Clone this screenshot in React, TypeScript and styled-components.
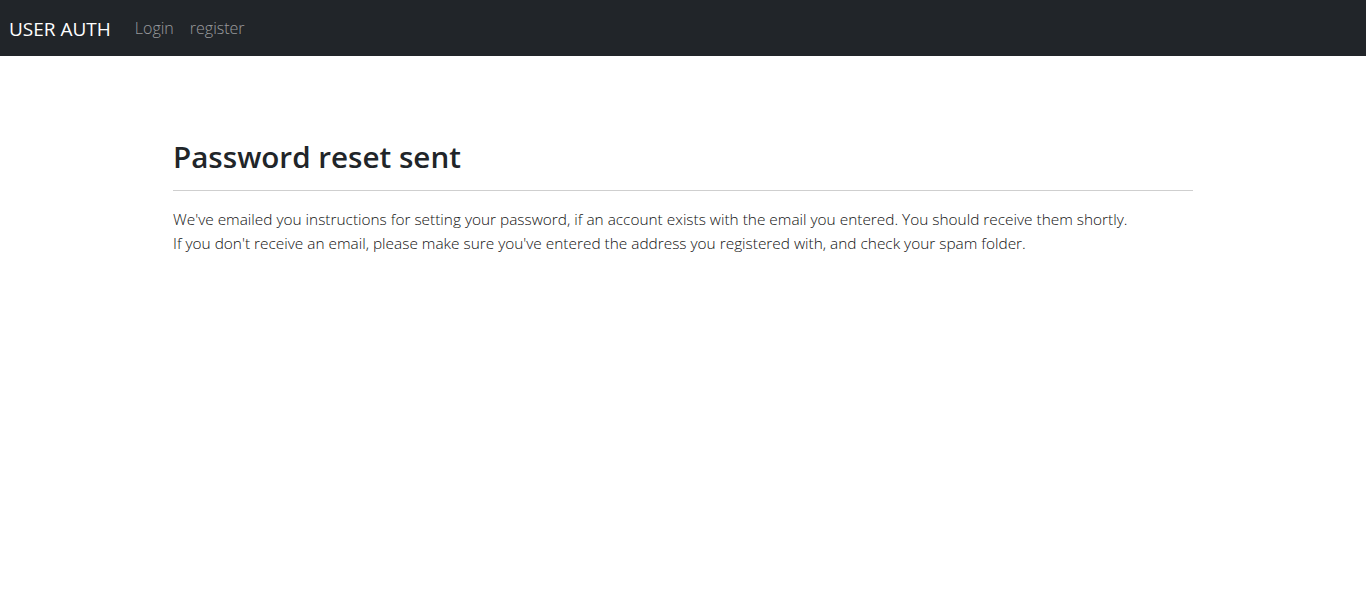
import React from 'react'
import styled, {createGlobalStyle} from 'styled-components'

const GlobalStyle = createGlobalStyle`
  * {
    box-sizing: border-box;
  }

  body {
    margin: 0;
    font-family: "Open Sans", "Noto Sans", sans-serif;
    font-size: 16px;
    line-height: 1.5;
    color: #212529;
    background-color: #fff;
  }
`

export default function App() {
    return (
        <>
            <GlobalStyle/>
            <Navbar>
                <Brand href="#">USER AUTH</Brand>
                <NavLinks>
                    <NavLink href="#">Login</NavLink>
                    <NavLink href="#">register</NavLink>
                </NavLinks>
            </Navbar>
            <Container>
                <Title>Password reset sent</Title>
                <Divider/>
                <Text>
                    We've emailed you instructions for setting your password, if an account exists with the email you entered. You should receive them shortly.
                </Text>
                <Text>
                    If you don't receive an email, please make sure you've entered the address you registered with, and check your spam folder.
                </Text>
            </Container>
        </>
    )
}

const Navbar = styled.nav`
  height: 56px;
  background-color: #212529;
  display: flex;
  align-items: center;
  padding: 0 9px;
`

const Brand = styled.a`
  font-size: 19px;
  color: #fff;
  text-decoration: none;
  margin-right: 16px;
  padding-top: 2px;
`

const NavLinks = styled.div`
  display: flex;
`

const NavLink = styled.a`
  font-size: 16px;
  font-weight: 300;
  color: rgba(255, 255, 255, 0.55);
  text-decoration: none;
  padding: 0 8px;
`

const Container = styled.main`
  width: 1020px;
  margin: 0 auto;
  padding-top: 83px;
`

const Title = styled.h2`
  margin: 0;
  font-size: 29.6px;
  font-weight: 600;
  line-height: 1.2;
`

const Divider = styled.hr`
  margin: 15px 0 17px;
  border: 0;
  border-top: 1px solid #cfcfcf;
`

const Text = styled.p`
  margin: 0;
  font-size: 15.4px;
  font-weight: 300;
  line-height: 24px;
  color: #111;
`
